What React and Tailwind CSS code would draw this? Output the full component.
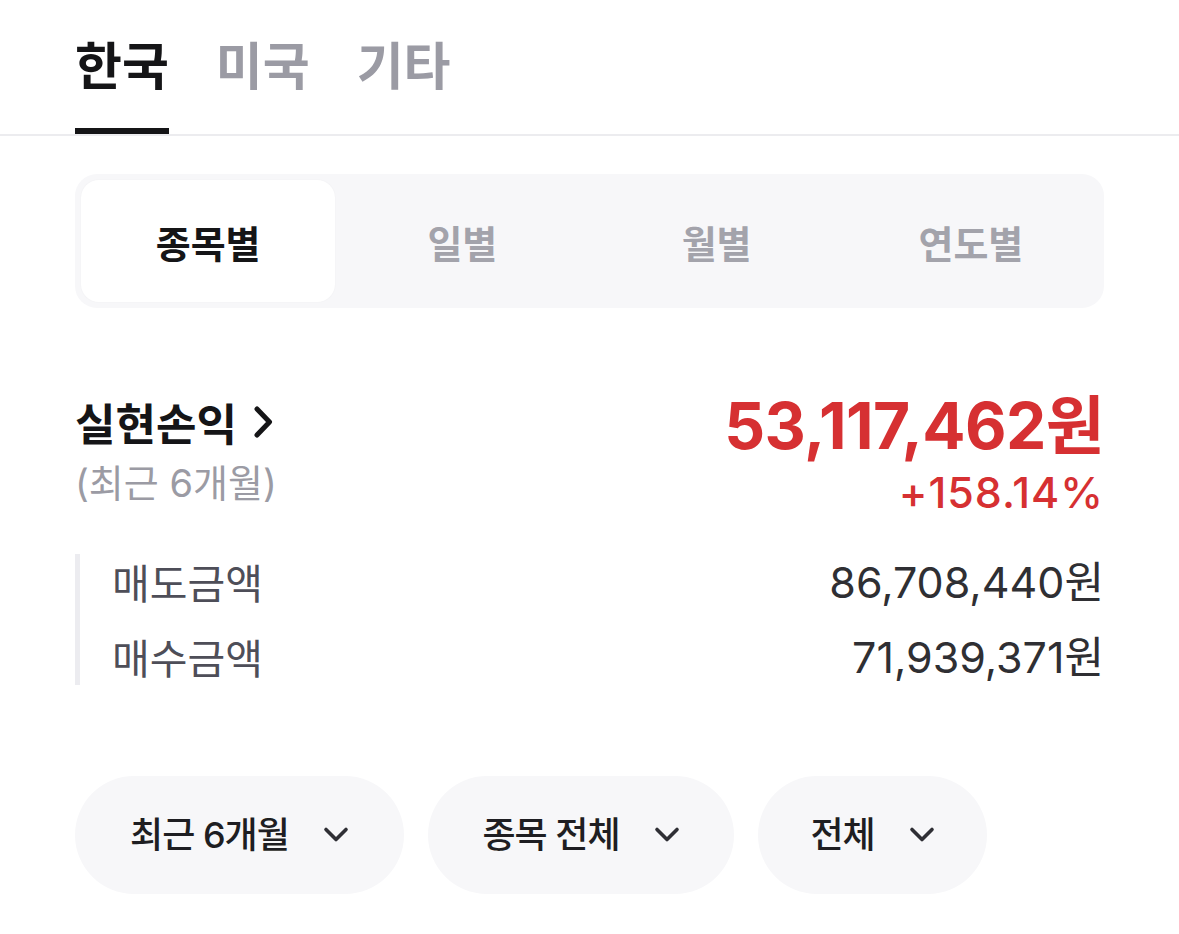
const num = "font-['Inter','Noto_Sans_CJK_KR',sans-serif]"

function Chevron({ dir }) {
  if (dir === "right") {
    return (
      <svg width="22" height="34" viewBox="0 0 22 34" fill="none">
        <path d="M4 4 L16.5 17 L4 30" stroke="#151517" strokeWidth="5" strokeLinecap="round" strokeLinejoin="round" />
      </svg>
    )
  }
  return (
    <svg width="26" height="18" viewBox="0 0 26 18" fill="none">
      <path d="M3 3.5 L13 13.5 L23 3.5" stroke="#2f2f35" strokeWidth="3.6" strokeLinecap="round" strokeLinejoin="round" />
    </svg>
  )
}

export default function App() {
  const countries = ["한국", "미국", "기타"]
  const periods = ["종목별", "일별", "월별", "연도별"]
  const filters = [
    { label: "최근 6개월", w: "w-[329px]" },
    { label: "종목 전체", w: "w-[306px]" },
    { label: "전체", w: "w-[229px]" },
  ]

  return (
    <div className="w-[1179px] h-[934px] bg-white overflow-hidden font-['Noto_Sans_CJK_KR',sans-serif]">
      {/* Country tabs */}
      <div className="border-b-2 border-[#ececef]">
        <div className="flex gap-[47px] px-[75px] pt-[28px]">
          {countries.map((c, i) => (
            <div key={c} className="flex flex-col">
              <span
                className={`text-[51px] leading-[70px] font-bold ${
                  i === 0 ? "text-[#151517]" : "text-[#9b9ba4]"
                }`}
              >
                {c}
              </span>
              <div className={`h-[6px] mt-[30px] ${i === 0 ? "bg-[#151517]" : "bg-transparent"}`} />
            </div>
          ))}
        </div>
      </div>

      <div className="px-[75px]">
        {/* Segmented control */}
        <div className="mt-[38px] h-[134px] rounded-[22px] bg-[#f7f7f9] p-[6px] grid grid-cols-4">
          {periods.map((p, i) => (
            <div
              key={p}
              className={`flex items-center justify-center rounded-[18px] ${
                i === 0 ? "bg-white shadow-[0_0_2px_rgba(0,0,0,0.04)]" : ""
              }`}
            >
              <span
                className={`text-[38px] font-bold ${
                  i === 0 ? "text-[#151517]" : "text-[#a3a3ab]"
                }`}
              >
                {p}
              </span>
            </div>
          ))}
        </div>

        {/* Realized P&L */}
        <div className="mt-[84px] flex justify-between">
          <div className="flex flex-col">
            <div className="flex items-center gap-[16px]">
              <span className="text-[44px] leading-[60px] font-bold text-[#151517]">실현손익</span>
              <Chevron dir="right" />
            </div>
            <span className={`mt-[6px] text-[38px] leading-[50px] text-[#9b9ba4] ${num}`}>(최근 6개월)</span>
          </div>
          <div className={`flex flex-col items-end ${num}`}>
            <span className="text-[64px] leading-[68px] font-bold text-[#d63032] tracking-[-0.6px]">53,117,462원</span>
            <span className="mt-[7px] text-[43px] leading-[50px] font-medium text-[#d63032] tracking-[1px]">+158.14%</span>
          </div>
        </div>

        {/* Breakdown */}
        <div className="mt-[37px] border-l-[5px] border-[#ececf0] pl-[32px] flex flex-col gap-[19px]">
          <div className="flex justify-between items-center h-[56px]">
            <span className="text-[41px] text-[#4e4e58]">매도금액</span>
            <span className={`text-[43px] text-[#2f2f33] ${num}`}>86,708,440원</span>
          </div>
          <div className="flex justify-between items-center h-[56px]">
            <span className="text-[41px] text-[#4e4e58]">매수금액</span>
            <span className={`text-[43px] text-[#2f2f33] ${num}`}>71,939,371원</span>
          </div>
        </div>

        {/* Filters */}
        <div className="mt-[91px] flex gap-[24px]">
          {filters.map((f) => (
            <div
              key={f.label}
              className={`${f.w} h-[118px] rounded-full bg-[#f7f7f9] flex items-center justify-center gap-[34px]`}
            >
              <span className={`text-[36px] font-medium text-[#1e1e22] tracking-[-1px] ${num}`}>{f.label}</span>
              <Chevron dir="down" />
            </div>
          ))}
        </div>
      </div>
    </div>
  )
}
